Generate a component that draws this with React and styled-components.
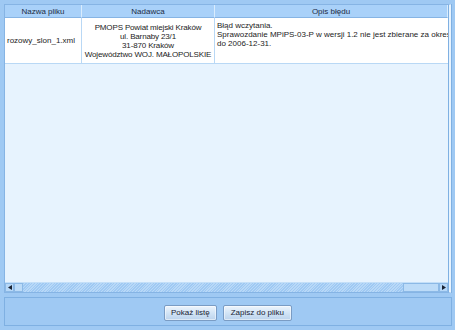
import React from "react";
import styled, { createGlobalStyle } from "styled-components";

const Global = createGlobalStyle`
  html, body { margin: 0; padding: 0; }
  body { background: #9fc9f3; font-family: "Liberation Sans", Arial, sans-serif; }
`;

const Window = styled.div`
  width: 455px;
  height: 330px;
  box-sizing: border-box;
  padding: 4px 3px 4px 4px;
  display: flex;
  flex-direction: column;
  gap: 4px;
  background: #9fc9f3;
`;

const GridBox = styled.div`
  flex: 1;
  display: flex;
  flex-direction: column;
  border: 1px solid #86b4e4;
  border-right: 4px double #7fb0e2;
  background: #e7f3fe;
  min-height: 0;
  overflow: hidden;
`;

const Table = styled.div`
  flex: 1;
  display: grid;
  grid-template-columns: 77px 133px 1fr;
  grid-template-rows: 13px 46px;
  align-content: start;
  font-size: 8px;
  color: #1c1c1c;
`;

const Head = styled.div`
  background: #a9d1f9;
  border-right: 1px solid #d9ecfd;
  border-bottom: 1px solid #86b4e4;
  display: flex;
  align-items: center;
  justify-content: center;
  color: #1e2c44;
  &:last-child { border-right: none; }
`;

const Cell = styled.div`
  background: #ffffff;
  border-right: 1px solid #b9d8f5;
  border-bottom: 1px solid #b9d8f5;
  display: flex;
  flex-direction: column;
  justify-content: ${p => (p.$top ? "flex-start" : "center")};
  align-items: ${p => (p.$center ? "center" : "flex-start")};
  text-align: ${p => (p.$center ? "center" : "left")};
  padding: ${p => (p.$top ? "3px 2px 0" : "0 2px")};
  line-height: 9px;
  letter-spacing: ${p => (p.$center ? "-0.15px" : "0")};
  white-space: nowrap;
  overflow: hidden;
  &:last-child { border-right: none; }
`;

const HScroll = styled.div`
  height: 9px;
  display: flex;
  background: #9fc9f3;
  border-top: 1px solid #c4dff8;
`;

const Arrow = styled.div`
  width: 9px;
  display: flex;
  align-items: center;
  justify-content: center;
  background: #b7d8f8;
  border: 1px solid #8cb9e6;
  box-sizing: border-box;
`;

const Thumb = styled.div`
  width: ${p => p.$w}px;
  background: #bcdbf8;
  border: 1px solid #8cb9e6;
  box-sizing: border-box;
`;

const Track = styled.div`
  flex: 1;
  background: repeating-linear-gradient(135deg, #9fc9f3 0 1px, #b8d8f7 1px 2px);
`;

const Bottom = styled.div`
  height: 29px;
  box-sizing: border-box;
  border: 1px solid #7fb0e2;
  display: flex;
  align-items: center;
  justify-content: center;
  gap: 6px;
  padding-top: 2px;
`;

const Button = styled.button`
  height: 16px;
  padding: 0 ${p => p.$pad}px;
  font-family: inherit;
  font-size: 8px;
  color: #1a2333;
  border: 1px solid #7a9cc4;
  border-radius: 2px;
  background: linear-gradient(#eef5fc, #d2e4f6 50%, #bcd3ec);
  box-shadow: inset 0 0 0 1px rgba(255,255,255,0.5);
`;

export default function App() {
  return (
    <>
      <Global />
      <Window>
        <GridBox>
          <Table>
            <Head>Nazwa pliku</Head>
            <Head>Nadawca</Head>
            <Head>Opis błędu</Head>
            <Cell>rozowy_slon_1.xml</Cell>
            <Cell $center>
              <span>PMOPS Powiat miejski Kraków</span>
              <span>ul. Barnaby 23/1</span>
              <span>31-870 Kraków</span>
              <span>Województwo WOJ. MAŁOPOLSKIE</span>
            </Cell>
            <Cell $top>
              <span>Błąd wczytania.</span>
              <span>Sprawozdanie MPiPS-03-P w wersji 1.2 nie jest zbierane za okres od 2006-01-01</span>
              <span>do 2006-12-31.</span>
            </Cell>
          </Table>
          <HScroll>
            <Arrow>
              <svg width="4" height="5" viewBox="0 0 4 5"><path d="M4 0L0 2.5 4 5z" fill="#1a2333" /></svg>
            </Arrow>
            <Thumb $w={9} />
            <Track />
            <Thumb $w={36} />
            <Arrow>
              <svg width="4" height="5" viewBox="0 0 4 5"><path d="M0 0L4 2.5 0 5z" fill="#1a2333" /></svg>
            </Arrow>
          </HScroll>
        </GridBox>
        <Bottom>
          <Button $pad={6}>Pokaż listę</Button>
          <Button $pad={7}>Zapisz do pliku</Button>
        </Bottom>
      </Window>
    </>
  );
}
